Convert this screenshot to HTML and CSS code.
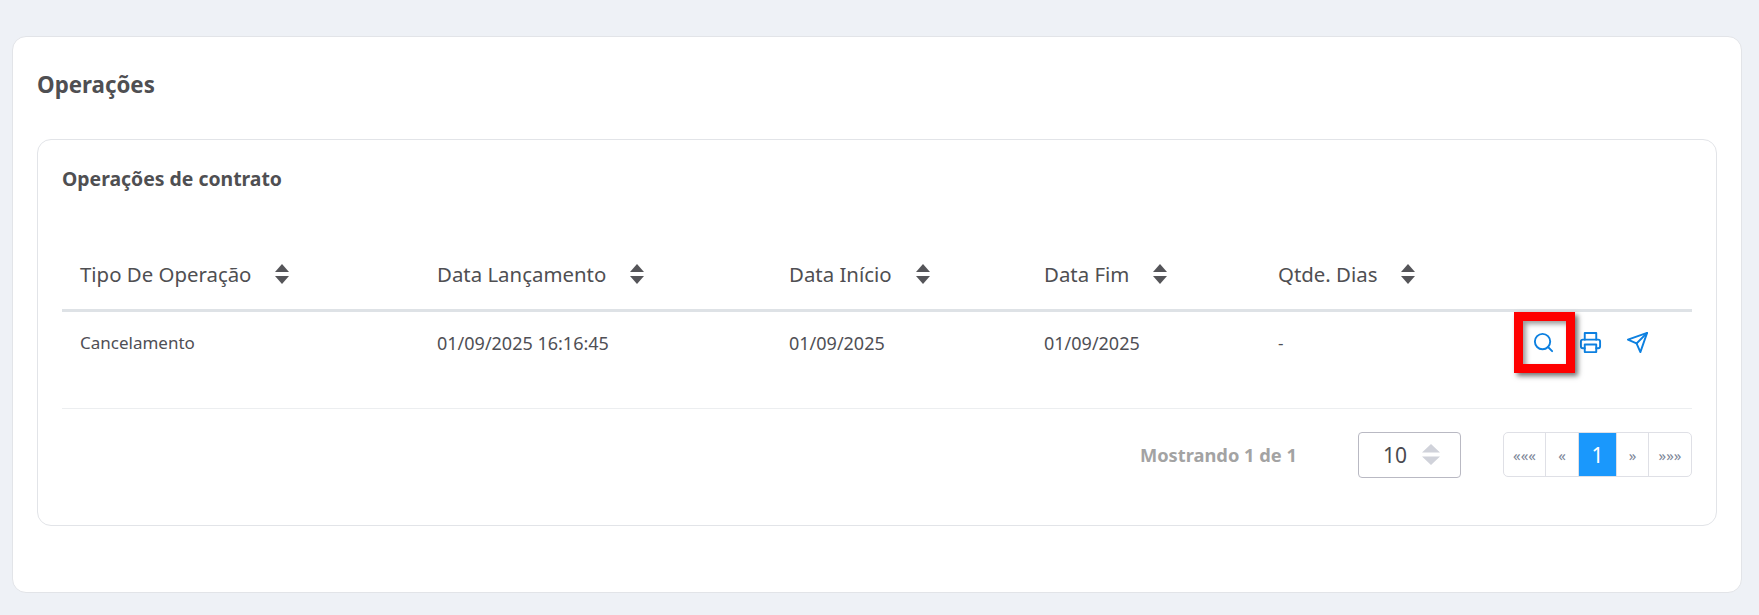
FILE: index.html
```html
<!DOCTYPE html>
<html lang="pt-BR">
<head>
<meta charset="utf-8">
<title>Operações</title>
<link rel="stylesheet" href="styles.css">
</head>
<body>
<main class="card">
  <h1 class="title">Operações</h1>
  <section class="panel">
    <h2 class="subtitle">Operações de contrato</h2>
    <table class="grid">
      <colgroup>
        <col class="c1"><col class="c2"><col class="c3"><col class="c4"><col class="c5"><col>
      </colgroup>
      <thead>
        <tr>
          <th><span class="th">Tipo De Operação<svg class="sort" viewBox="0 0 14 20"><path d="M7 0l7 8H0zM0 12h14l-7 8z"/></svg></span></th>
          <th><span class="th">Data Lançamento<svg class="sort" viewBox="0 0 14 20"><path d="M7 0l7 8H0zM0 12h14l-7 8z"/></svg></span></th>
          <th><span class="th">Data Início<svg class="sort" viewBox="0 0 14 20"><path d="M7 0l7 8H0zM0 12h14l-7 8z"/></svg></span></th>
          <th><span class="th">Data Fim<svg class="sort" viewBox="0 0 14 20"><path d="M7 0l7 8H0zM0 12h14l-7 8z"/></svg></span></th>
          <th><span class="th">Qtde. Dias<svg class="sort" viewBox="0 0 14 20"><path d="M7 0l7 8H0zM0 12h14l-7 8z"/></svg></span></th>
          <th></th>
        </tr>
      </thead>
      <tbody>
        <tr>
          <td>Cancelamento</td>
          <td class="num">01/09/2025 16:16:45</td>
          <td class="num">01/09/2025</td>
          <td class="num">01/09/2025</td>
          <td>-</td>
          <td>
            <div class="actions">
              <span class="mark"></span>
              <svg class="icon" viewBox="0 0 24 24"><circle cx="11" cy="11" r="8"/><path d="M21 21l-4.300-4.300"/></svg>
              <svg class="icon" viewBox="0 0 24 24"><path d="M6 9V2h12v7"/><path d="M6 18H4a2 2 0 0 1-2-2v-5a2 2 0 0 1 2-2h16a2 2 0 0 1 2 2v5a2 2 0 0 1-2 2h-2"/><path d="M6 14h12v8H6z"/></svg>
              <svg class="icon" viewBox="0 0 24 24"><path d="M22 2L15 22l-4-9-9-4z"/><path d="M22 2L11 13"/></svg>
            </div>
          </td>
        </tr>
      </tbody>
    </table>
    <div class="footer">
      <span class="count">Mostrando 1 de 1</span>
      <div class="select"><span>10</span><svg class="sort-light" viewBox="0 0 18 21"><path d="M9 0l9 8.500H0zM0 12.500h18L9 21z"/></svg></div>
      <nav class="pager">
        <a class="p1">«««</a><a class="p2">«</a><a class="p3 on">1</a><a class="p4">»</a><a class="p5">»»»</a>
      </nav>
    </div>
  </section>
</main>
</body>
</html>
```
FILE: styles.css
```css
* { box-sizing: border-box; }
html, body { margin: 0; height: 100%; }
body {
  background: #eef1f6;
  padding: 36px 17px 0 12px;
  font-family: "Noto Sans", "Open Sans", sans-serif;
  color: #4a4a4f;
}
.card {
  height: 557px;
  background: #fff;
  border: 1px solid #e2e4e8;
  border-radius: 14px;
  padding: 0 24px;
}
.title {
  margin: 0;
  padding-top: 33px;
  height: 102px;
  font-size: 22.3px;
  line-height: 30px;
  font-weight: 700;
  color: #4f4f52;
}
.panel {
  height: 387px;
  border: 1px solid #e2e4e8;
  border-radius: 14px;
  padding: 0 24px;
}
.subtitle {
  margin: 0;
  padding-top: 26px;
  height: 79px;
  font-size: 19.4px;
  line-height: 26px;
  font-weight: 700;
  color: #4f4f52;
}
.grid {
  width: 100%;
  border-collapse: collapse;
  table-layout: fixed;
}
.c1 { width: 357px; }
.c2 { width: 352px; }
.c3 { width: 255px; }
.c4 { width: 234px; }
.c5 { width: 232px; }
th {
  height: 91px;
  padding: 21px 0 0 18px;
  text-align: left;
  font-weight: 400;
  font-size: 20.4px;
  border-bottom: 3px solid #dee2e6;
}
.th { display: inline-flex; align-items: center; gap: 24px; color: #4f4f52; }
.sort { width: 14px; height: 20px; fill: #555559; }
td {
  height: 98px;
  padding: 19px 0 0 18px;
  font-size: 17px;
  color: #4f4f55;
  border-bottom: 1px solid #eceef0;
  vertical-align: top;
  line-height: 24px;
}
td.num { font-size: 18px; }
.actions {
  position: relative;
  display: flex;
  align-items: center;
  gap: 24px;
  margin-left: 22px;
}
.icon {
  width: 23px;
  height: 23px;
  fill: none;
  stroke: #0d80e0;
  stroke-width: 2;
  stroke-linecap: round;
  stroke-linejoin: round;
  flex: none;
}
.mark {
  position: absolute;
  left: -18px;
  top: -19px;
  width: 61px;
  height: 61px;
  border: 9px solid #fe0000;
  box-shadow: 3px 3px 5px rgba(0,0,0,.55), inset 3px 3px 5px rgba(0,0,0,.4);
}
.footer {
  display: flex;
  align-items: center;
  justify-content: flex-end;
  margin-top: 23px;
  height: 46px;
}
.count {
  font-size: 18.3px;
  font-weight: 700;
  color: #a3a3a3;
  margin-right: 61px;
}
.select {
  width: 103px;
  height: 46px;
  border: 1px solid #b9b9c3;
  border-radius: 4px;
  display: flex;
  align-items: center;
  justify-content: space-between;
  padding: 0 20px 0 24px;
  font-size: 21px;
  margin-right: 42px;
}
.sort-light { width: 18px; height: 21px; fill: #d0d2da; }
.pager {
  display: flex;
  height: 45px;
  width: 189px;
  border: 1px solid #dfe0e6;
  border-radius: 5px;
  overflow: hidden;
}
.pager a {
  display: flex;
  align-items: center;
  justify-content: center;
  font-size: 15px;
  color: #7d8698;
  border-right: 1px solid #dfe0e6;
}
.pager a:last-child { border-right: 0; }
.p1 { width: 42px; }
.p2 { width: 33px; }
.p3 { width: 38px; }
.p4 { width: 32px; }
.p5 { flex: 1; }
.pager a.on { background: #1a98fc; color: #fff; font-size: 21px; }
```
